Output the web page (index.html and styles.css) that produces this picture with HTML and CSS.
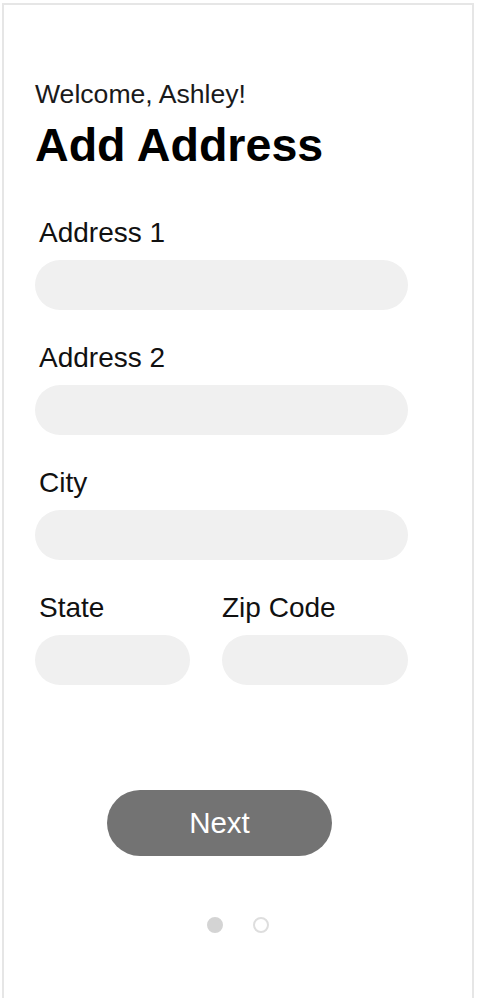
FILE: index.html
```html
<!DOCTYPE html>
<html lang="en">
<head>
<meta charset="utf-8">
<title>Add Address</title>
<link rel="stylesheet" href="styles.css">
</head>
<body>
<div class="frame">
  <header class="head">
    <p class="welcome">Welcome, Ashley!</p>
    <h1 class="title">Add Address</h1>
  </header>
  <form class="form">
    <div class="field">
      <label class="label">Address 1</label>
      <div class="input"></div>
    </div>
    <div class="field">
      <label class="label">Address 2</label>
      <div class="input"></div>
    </div>
    <div class="field">
      <label class="label">City</label>
      <div class="input"></div>
    </div>
    <div class="row">
      <div class="field state">
        <label class="label">State</label>
        <div class="input"></div>
      </div>
      <div class="field zip">
        <label class="label">Zip Code</label>
        <div class="input"></div>
      </div>
    </div>
  </form>
  <div class="actions">
    <button class="next" type="button">Next</button>
  </div>
  <div class="dots">
    <span class="dot filled"></span>
    <span class="dot"></span>
  </div>
</div>
</body>
</html>
```

FILE: styles.css
```css
* { box-sizing: border-box; }
html, body { margin: 0; padding: 0; background: #ffffff; }
body {
  font-family: "Liberation Sans", Arial, sans-serif;
  color: #111111;
  height: 998px;
  overflow: hidden;
}
.frame {
  margin: 3px 4px 0 2px;
  height: 1000px;
  border: 2px solid #e6e6e6;
  border-bottom: none;
  padding: 74px 0 0 31px;
  display: flex;
  flex-direction: column;
}
.head { display: flex; flex-direction: column; gap: 10px; }
.welcome {
  margin: 0;
  font-size: 26.6px;
  line-height: 30px;
  color: #1a1a1a;
}
.title {
  margin: 0;
  font-size: 46.6px;
  line-height: 52px;
  font-weight: 700;
  color: #000000;
}
.form {
  margin-top: 47px;
  display: flex;
  flex-direction: column;
  gap: 33px;
  width: 373px;
}
.field { display: flex; flex-direction: column; gap: 8px; }
.label {
  font-size: 28px;
  line-height: 30px;
  padding: 0 0 4px 4px;
  color: #111111;
}
.zip .label { padding-left: 0; }
.input {
  height: 50px;
  border-radius: 25px;
  background: #f0f0f0;
}
.row { display: flex; gap: 32px; }
.state { width: 155px; }
.zip { flex: 1; }
.actions {
  margin-top: 105px;
  padding-left: 72px;
}
.next {
  width: 225px;
  height: 66px;
  border: none;
  border-radius: 33px;
  background: #737373;
  color: #ffffff;
  font-family: "Liberation Sans", Arial, sans-serif;
  font-size: 29.5px;
  padding: 0;
}
.dots {
  margin-top: 61px;
  display: flex;
  gap: 30px;
  padding-left: 172px;
}
.dot {
  width: 16px;
  height: 16px;
  border-radius: 50%;
  border: 2px solid #dedede;
  background: #ffffff;
}
.dot.filled { background: #d4d4d4; border-color: #d4d4d4; }
```
